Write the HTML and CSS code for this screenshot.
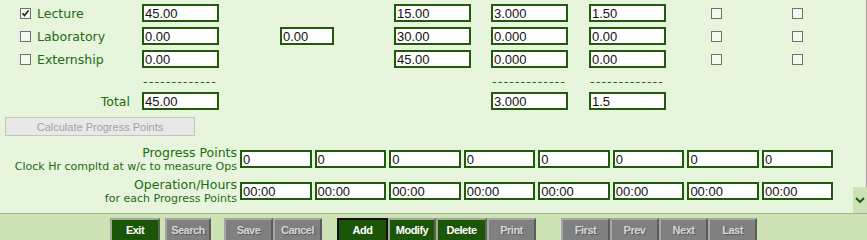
FILE: index.html
```html
<!DOCTYPE html>
<html>
<head>
<meta charset="utf-8">
<link rel="stylesheet" href="styles.css">
</head>
<body>
<div class="page">
  <div class="main">
    <div class="grid">
      <div class="lbl"><span class="cb"><svg width="9" height="9" viewBox="0 0 9 9"><path d="M1.5 4.2 L3.5 6.5 L7.5 1.5" fill="none" stroke="#222" stroke-width="1.6"/></svg></span>Lecture</div>
      <div class="c"><input class="in" value="45.00"></div>
      <div class="c"></div>
      <div class="c"><input class="in" value="15.00"></div>
      <div class="c"><input class="in" value="3.000"></div>
      <div class="c"><input class="in" value="1.50"></div>
      <div class="c"><span class="cb"></span></div>
      <div class="c"><span class="cb"></span></div>

      <div class="lbl"><span class="cb"></span>Laboratory</div>
      <div class="c"><input class="in" value="0.00"></div>
      <div class="c"><input class="in small" value="0.00"></div>
      <div class="c"><input class="in" value="30.00"></div>
      <div class="c"><input class="in" value="0.000"></div>
      <div class="c"><input class="in" value="0.00"></div>
      <div class="c"><span class="cb"></span></div>
      <div class="c"><span class="cb"></span></div>

      <div class="lbl"><span class="cb"></span>Externship</div>
      <div class="c"><input class="in" value="0.00"></div>
      <div class="c"></div>
      <div class="c"><input class="in" value="45.00"></div>
      <div class="c"><input class="in" value="0.000"></div>
      <div class="c"><input class="in" value="0.00"></div>
      <div class="c"><span class="cb"></span></div>
      <div class="c"><span class="cb"></span></div>

      <div class="lbl"></div>
      <div class="c"><span class="dash">-------------</span></div>
      <div class="c"></div>
      <div class="c"></div>
      <div class="c"><span class="dash">-------------</span></div>
      <div class="c"><span class="dash">-------------</span></div>
      <div class="c"></div>
      <div class="c"></div>

      <div class="lbl total">Total</div>
      <div class="c"><input class="in" value="45.00"></div>
      <div class="c"></div>
      <div class="c"></div>
      <div class="c"><input class="in" value="3.000"></div>
      <div class="c"><input class="in" value="1.5"></div>
      <div class="c"></div>
      <div class="c"></div>
    </div>

    <button class="calc" disabled>Calculate Progress Points</button>

    <div class="pp">
      <div class="pp-row">
        <div class="pp-label"><div class="l1">Progress Points</div><div class="l2">Clock Hr compltd at w/c to measure Ops</div></div>
        <div class="pp-inputs">
          <input class="pin" value="0"><input class="pin" value="0"><input class="pin" value="0"><input class="pin" value="0"><input class="pin" value="0"><input class="pin" value="0"><input class="pin" value="0"><input class="pin" value="0">
        </div>
      </div>
      <div class="pp-row">
        <div class="pp-label"><div class="l1">Operation/Hours</div><div class="l2">for each Progress Points</div></div>
        <div class="pp-inputs">
          <input class="pin" value="00:00"><input class="pin" value="00:00"><input class="pin" value="00:00"><input class="pin" value="00:00"><input class="pin" value="00:00"><input class="pin" value="00:00"><input class="pin" value="00:00"><input class="pin" value="00:00">
        </div>
      </div>
    </div>

    <div class="scroll-btn"><svg width="10" height="6" viewBox="0 0 10 6"><path d="M1 1 L5 5 L9 1" fill="none" stroke="#1e5a0a" stroke-width="2"/></svg></div>
  </div>

  <div class="toolbar">
    <button class="btn on w50">Exit</button>
    <button class="btn off w46 g5">Search</button>
    <button class="btn off w49 g13">Save</button>
    <button class="btn off w49">Cancel</button>
    <button class="btn on focus w51 g15">Add</button>
    <button class="btn on w48">Modify</button>
    <button class="btn on w51">Delete</button>
    <button class="btn off w49">Print</button>
    <button class="btn off w49 g25">First</button>
    <button class="btn off w49">Prev</button>
    <button class="btn off w49">Next</button>
    <button class="btn off w49">Last</button>
  </div>
</div>
</body>
</html>
```

FILE: styles.css
```css
* { box-sizing: border-box; }

body {
  margin: 0;
  background: #cde3b5;
  font-family: "DejaVu Sans", Verdana, sans-serif;
}

.page {
  width: 867px;
  height: 240px;
  overflow: hidden;
}

.main {
  position: relative;
  height: 214px;
  background: #e6f5dc;
  border-right: 1px solid #a4a4a4;
  border-bottom: 1px solid #9cb88a;
}

.grid {
  display: grid;
  grid-template-columns: 142px 138px 114px 97px 98px 122px 81px 1fr;
  grid-template-rows: 18px 18px 18px 14px 18px;
  row-gap: 5px;
  padding-top: 4px;
}

.lbl {
  display: flex;
  align-items: center;
  gap: 6px;
  padding-left: 20px;
  font-size: 12.5px;
  color: #256a12;
}

.lbl.total {
  justify-content: flex-end;
  padding-right: 12px;
}

.c {
  display: flex;
  align-items: center;
}

.cb {
  display: inline-flex;
  align-items: center;
  justify-content: center;
  width: 11px;
  height: 11px;
  border: 1px solid #707070;
  background: #f4faf0;
  flex: none;
}

.c .cb { margin-top: 1px; }

.in, .pin {
  width: 77px;
  height: 18px;
  border: 2px solid #1e5b0b;
  background: #fff;
  padding: 0 0 0 1px;
  margin: 0;
  font-family: "Liberation Sans", Arial, sans-serif;
  font-size: 13px;
  color: #111;
  outline: none;
}

.in.small { width: 54px; }

.dash {
  font-family: "DejaVu Sans", Verdana, sans-serif;
  font-size: 13px;
  letter-spacing: 1px;
  color: #256a12;
  line-height: 14px;
  margin-left: 1px;
  margin-top: 3px;
}

.calc {
  display: block;
  margin: 7px 0 0 5px;
  width: 190px;
  height: 19px;
  padding: 0;
  background: #e8e8e8;
  border: 1px solid #c4c4c4;
  color: #a2a2a2;
  font-family: "Liberation Sans", Arial, sans-serif;
  font-size: 11px;
}

.pp {
  margin-top: 9px;
  display: flex;
  flex-direction: column;
  gap: 4px;
}

.pp-row {
  display: flex;
  align-items: center;
}

.pp-label {
  width: 237px;
  text-align: right;
  color: #256a12;
  margin-right: 3px;
}

.l1 {
  font-size: 12.5px;
  line-height: 15px;
}

.l2 {
  font-size: 11px;
  line-height: 13px;
}

.pp-inputs {
  display: flex;
  gap: 3.07px;
}

.pin { width: 71.5px; }

.scroll-btn {
  position: absolute;
  right: -1px;
  bottom: 0;
  width: 14px;
  height: 26px;
  background: #cde1b8;
  display: flex;
  align-items: center;
  justify-content: center;
}

.toolbar {
  display: flex;
  padding: 4px 0 0 110px;
  height: 26px;
}

.btn {
  height: 24px;
  padding: 0;
  font-family: "Liberation Sans", Arial, sans-serif;
  font-weight: bold;
  font-size: 11px;
  letter-spacing: -0.5px;
  flex: none;
}

.btn.on {
  background: #1b5507;
  color: #fff;
  border: 2px solid #8a9a80;
  border-color: #a0a898 #5a6650 #5a6650 #a0a898;
}

.btn.on.focus {
  border: 2px solid #111;
}

.btn.off {
  background: #808080;
  color: #d6d6d6;
  border: 2px solid;
  border-color: #a6a6a6 #5c5c5c #5c5c5c #a6a6a6;
  text-shadow: 1px 1px 0 #5a5a5a;
}

.w46 { width: 46px; }
.w48 { width: 48px; }
.w49 { width: 49px; }
.w50 { width: 50px; }
.w51 { width: 51px; }
.g5 { margin-left: 5px; }
.g13 { margin-left: 13px; }
.g15 { margin-left: 15px; }
.g25 { margin-left: 25px; }
```
